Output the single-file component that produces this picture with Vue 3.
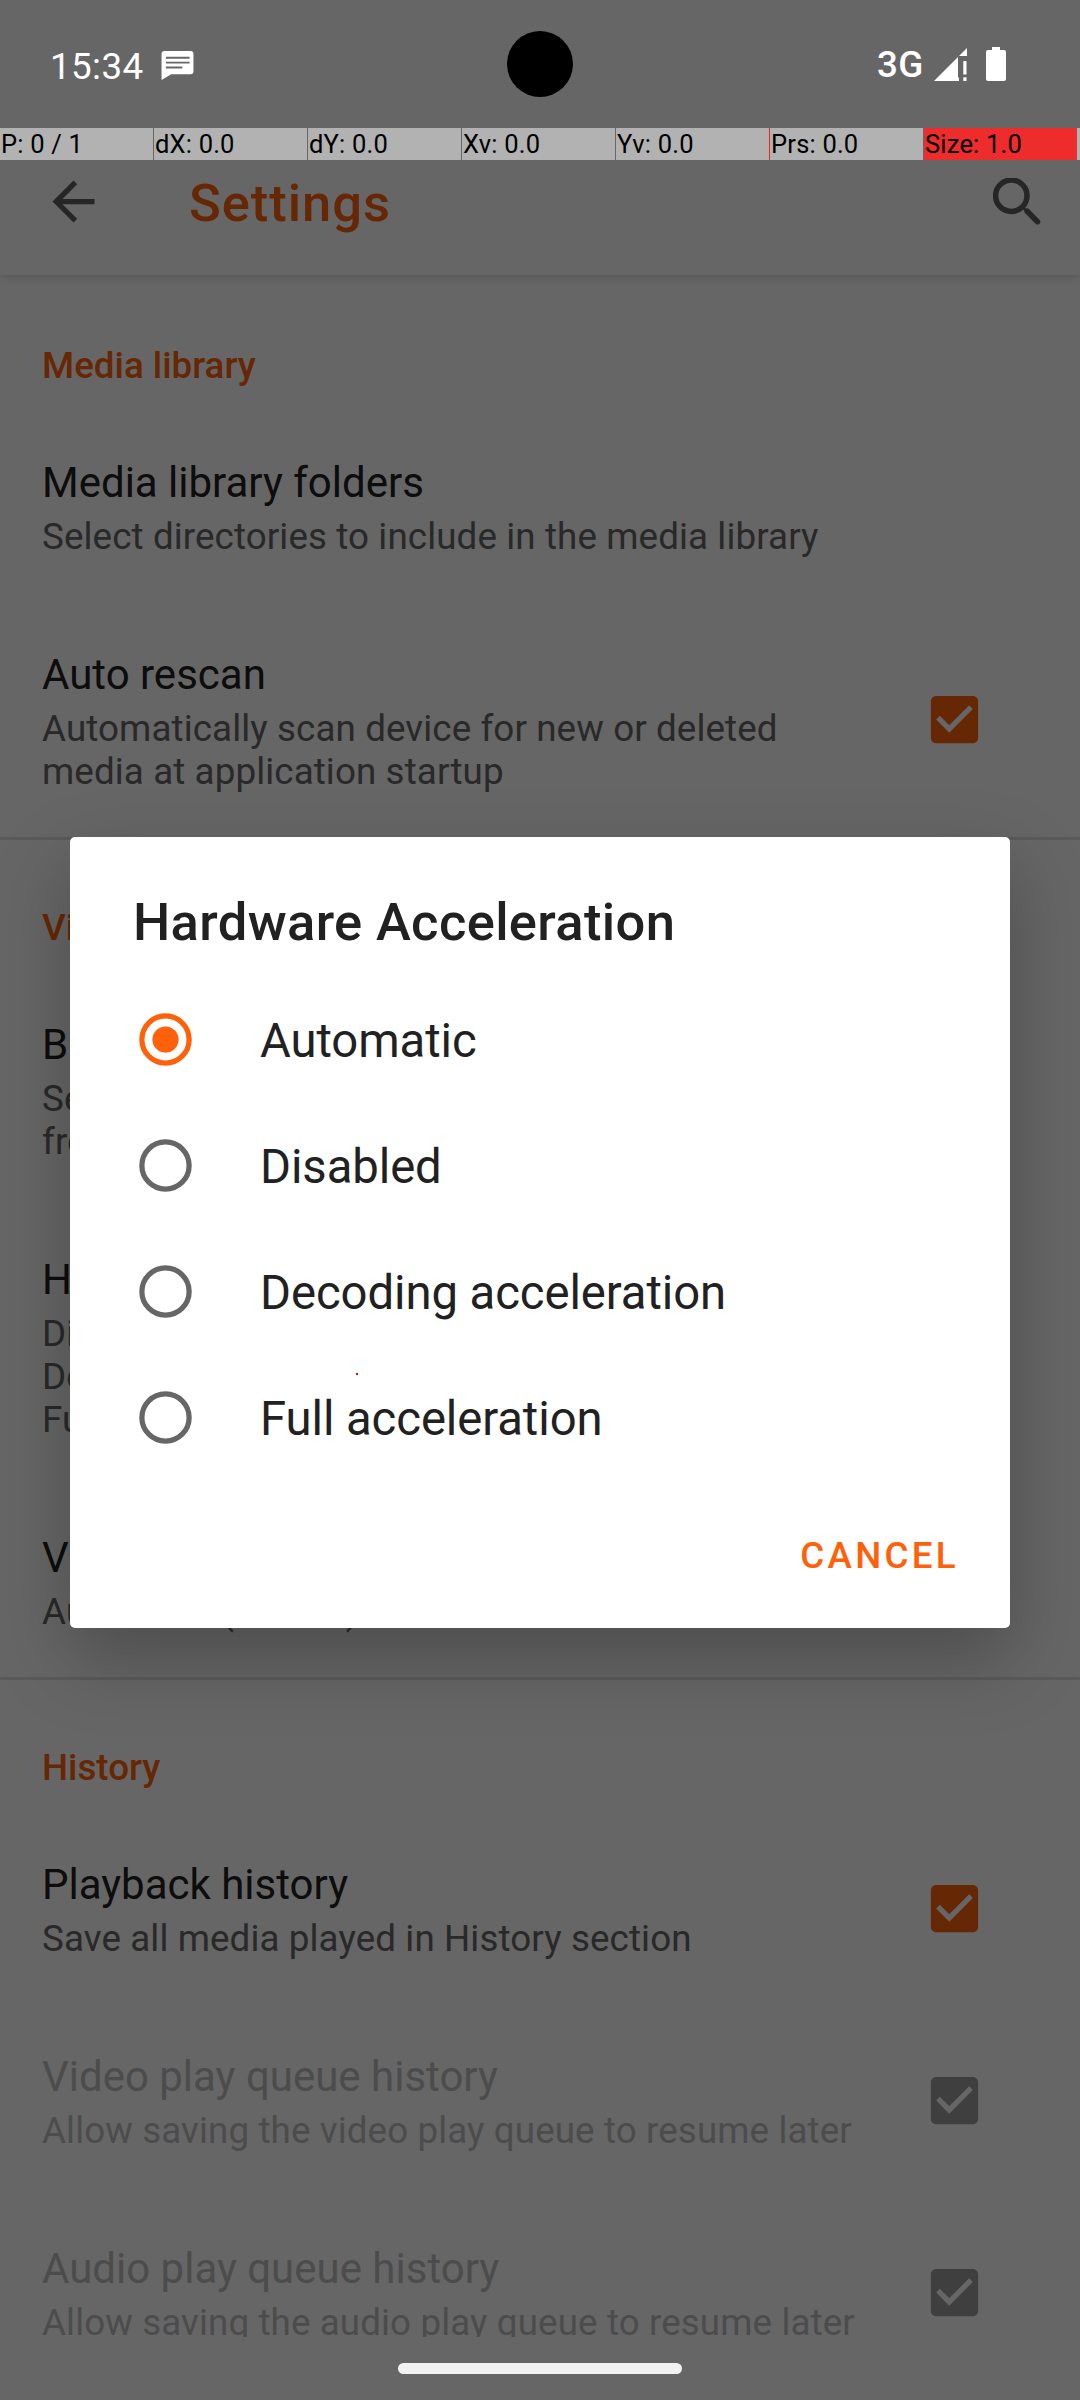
<script setup>
const pointerCells = ['P: 0 / 1', 'dX: 0.0', 'dY: 0.0', 'Xv: 0.0', 'Yv: 0.0', 'Prs: 0.0', 'Size: 1.0']

const sections = [
  {
    title: 'Media library',
    rows: [
      { title: 'Media library folders', lines: ['Select directories to include in the media library'] },
      {
        title: 'Auto rescan',
        lines: ['Automatically scan device for new or deleted', 'media at application startup'],
        check: true,
      },
    ],
  },
  {
    title: 'Video',
    rows: [
      { title: 'Background/PiP mode', lines: ['Select the behavior when switching away', 'from VLC'] },
      {
        title: 'Hardware Acceleration',
        lines: [
          'Disabled: better stability.',
          'Decoding: may improve performance.',
          'Full: may improve performance further.',
        ],
      },
      { title: 'Video screen orientation', lines: ['Automatic (sensor)'] },
    ],
  },
  {
    title: 'History',
    rows: [
      { title: 'Playback history', lines: ['Save all media played in History section'], check: true },
      {
        title: 'Video play queue history',
        lines: ['Allow saving the video play queue to resume later'],
        check: true,
        disabled: true,
      },
      {
        title: 'Audio play queue history',
        lines: ['Allow saving the audio play queue to resume later'],
        check: true,
        disabled: true,
      },
    ],
  },
]

const options = [
  { label: 'Automatic', selected: true },
  { label: 'Disabled' },
  { label: 'Decoding acceleration' },
  { label: 'Full acceleration' },
]
</script>

<template>
  <div class="screen">
    <div class="app">
      <header class="toolbar">
        <svg class="back" viewBox="0 0 24 24"><path d="M20 11H7.83l5.59-5.59L12 4l-8 8 8 8 1.41-1.41L7.83 13H20z" /></svg>
        <h1>Settings</h1>
        <svg class="search" viewBox="0 0 48 48">
          <circle cx="18.300" cy="17.700" r="15.700" />
          <path d="M29 28.500L34 33.500" class="link" />
          <path d="M34.200 33.200L44.500 43.700" />
        </svg>
      </header>
      <main class="list">
        <section v-for="s in sections" :key="s.title">
          <h2>{{ s.title }}</h2>
          <div v-for="r in s.rows" :key="r.title" class="row" :class="{ disabled: r.disabled }">
            <div class="texts">
              <div class="title">{{ r.title }}</div>
              <div v-for="l in r.lines" :key="l" class="summary">{{ l }}</div>
            </div>
            <svg v-if="r.check" class="check" viewBox="0 0 24 24">
              <path d="M19 3H5c-1.11 0-2 .9-2 2v14c0 1.1.89 2 2 2h14c1.11 0 2-.9 2-2V5c0-1.1-.89-2-2-2zm-9 14l-5-5 1.41-1.41L10 14.17l7.59-7.59L19 8l-9 9z" />
            </svg>
          </div>
        </section>
      </main>
    </div>

    <div class="overlay">
      <div class="dialog">
        <h3>Hardware Acceleration</h3>
        <div v-for="o in options" :key="o.label" class="option" :class="{ selected: o.selected }">
          <svg viewBox="0 0 24 24">
            <circle class="ring" cx="12" cy="12" r="9" />
            <circle v-if="o.selected" class="dot" cx="12" cy="12" r="5" />
          </svg>
          <span>{{ o.label }}</span>
        </div>
        <div class="actions"><button>CANCEL</button></div>
      </div>
    </div>

    <div class="system">
      <div class="status">
        <span class="time">15:34</span>
        <svg class="message" viewBox="0 0 33 30">
          <path fill-rule="evenodd" d="M3 0H30a3 3 0 0 1 3 3V21a3 3 0 0 1-3 3H10L0 30V3a3 3 0 0 1 3-3zM4.500 6v2H29V6zM4.500 11v2H29v-2zM4.500 16v2H21.500v-2z" />
        </svg>
        <span class="spacer"></span>
        <span class="net">3G</span>
        <svg class="signal" viewBox="0 0 33 33">
          <path d="M33 0V8H25zM24 9V29.500H25V33H0zM29.300 13H32.500V26.500H29.300zM29.300 29.300H32.500V33H29.300z" />
        </svg>
        <svg class="battery" viewBox="0 0 20 34">
          <path d="M6 0h8v3h4a2 2 0 0 1 2 2V32a2 2 0 0 1-2 2H2a2 2 0 0 1-2-2V5a2 2 0 0 1 2-2h4z" />
        </svg>
      </div>
      <div class="pointer">
        <span v-for="(c, i) in pointerCells" :key="c" :class="{ mark: i === 4, hot: i === 6 }">{{ c }}</span>
        <i></i>
      </div>
    </div>
    <div class="camera"></div>
    <div class="touch"></div>
    <div class="handle"></div>
  </div>
</template>

<style>
body {
  margin: 0;
}
</style>

<style scoped>
.screen {
  position: relative;
  width: 1080px;
  height: 2400px;
  overflow: hidden;
  background: #fff;
  font-family: Roboto, sans-serif;
  color: #212121;
}
h1,
h2,
h3 {
  margin: 0;
  font-weight: 500;
}
.app {
  display: flex;
  flex-direction: column;
  height: 2337px;
  overflow: hidden;
}
.toolbar {
  display: flex;
  align-items: center;
  flex: none;
  box-sizing: border-box;
  height: 275px;
  padding: 128px 39px 0 42px;
  box-shadow: 0 2px 10px rgba(0, 0, 0, 0.15);
}
.back {
  width: 63px;
  height: 63px;
  fill: #606060;
}
h1 {
  flex: 1;
  padding-left: 84px;
  font-size: 52.5px;
  line-height: 62px;
  letter-spacing: 0.95px;
  color: #ff610a;
  transform: translateY(1px);
}
.search {
  width: 48px;
  height: 48px;
  fill: none;
  stroke: #606060;
  stroke-width: 5.5;
  stroke-linecap: round;
}
.search .link {
  stroke-width: 3;
}
.list {
  flex: none;
}
h2 {
  box-sizing: border-box;
  height: 135px;
  padding: 69px 42px 0;
  font-size: 36.75px;
  line-height: 43px;
  color: #ff610a;
}
section + section h2 {
  border-top: 3px solid #e0e0e0;
  padding-top: 66px;
}
.row {
  display: flex;
  align-items: center;
  justify-content: space-between;
  padding: 48px 94.5px 44px 42px;
}
.title {
  margin-bottom: 8px;
  font-size: 42px;
  line-height: 49px;
  white-space: nowrap;
}
.summary {
  font-size: 36.75px;
  line-height: 43px;
  letter-spacing: 0.11px;
  color: #666;
  white-space: nowrap;
}
.check {
  width: 63px;
  height: 63px;
  margin: -14px 0 -10px;
  fill: #ff610a;
}
.disabled .title,
.disabled .summary {
  color: #bebebe;
}
.disabled .check {
  fill: #9e9e9e;
}
.overlay {
  position: absolute;
  inset: 0;
  box-sizing: border-box;
  padding: 837px 70px 0;
  background: rgba(0, 0, 0, 0.6);
}
.dialog {
  box-sizing: border-box;
  height: 791px;
  border-radius: 5px;
  background: #fff;
  box-shadow: 0 30px 76px rgba(0, 0, 0, 0.25);
}
h3 {
  box-sizing: border-box;
  height: 139px;
  padding: 54px 63px 0;
  font-size: 52.5px;
  line-height: 62px;
  letter-spacing: 0.36px;
}
.option {
  display: flex;
  align-items: center;
  height: 126px;
  padding-left: 63.5px;
  font-size: 47.25px;
  letter-spacing: -0.08px;
}
.option svg {
  width: 63px;
  height: 63px;
}
.option span {
  margin-left: 63.5px;
  line-height: 56px;
  transform: translateY(2px);
}
.ring {
  fill: none;
  stroke: #666;
  stroke-width: 2;
}
.selected .ring {
  stroke: #ff610a;
}
.dot {
  fill: #ff610a;
}
.actions {
  display: flex;
  justify-content: flex-end;
  padding: 54px 51px 0 0;
}
button {
  padding: 0;
  border: 0;
  background: none;
  font: 500 36.75px/43px Roboto, sans-serif;
  letter-spacing: 3.28px;
  color: #ff610a;
}
.system {
  position: absolute;
  inset: 0 0 auto;
}
.status {
  display: flex;
  align-items: center;
  box-sizing: border-box;
  height: 128px;
  padding: 0 74px 0 50px;
  font-size: 36.75px;
  color: #fff;
}
.status svg {
  fill: #fff;
}
.time {
  width: 110.5px;
  letter-spacing: 0.4px;
  transform: translateY(2px);
}
.message {
  width: 33px;
  height: 29px;
  margin-top: 3px;
}
.spacer {
  flex: 1;
}
.net {
  margin-right: -1px;
  font-weight: 500;
  letter-spacing: 0.6px;
}
.signal {
  width: 33px;
  height: 33px;
  margin: 0 19px 0 11px;
}
.battery {
  width: 20px;
  height: 34px;
}
.pointer {
  display: flex;
  gap: 1px;
  height: 32px;
  font-size: 25.5px;
  line-height: 33px;
  letter-spacing: 0.2px;
  color: #000;
}
.pointer span {
  box-sizing: border-box;
  width: 153px;
  height: 32px;
  padding-left: 1px;
  background: #b2b2b2;
  white-space: nowrap;
}
.pointer .mark {
  box-shadow: 1px 0 0 #e22;
}
.pointer .hot {
  background: #ee2c2c;
}
.pointer i {
  flex: 1;
  margin-left: -1px;
  background: #b2b2b2;
}
.camera {
  position: absolute;
  left: 507px;
  top: 31px;
  width: 66px;
  height: 66px;
  border-radius: 50%;
  background: #000;
}
.touch {
  position: absolute;
  left: 356px;
  top: 1373px;
  width: 2px;
  height: 2px;
  background: #f00;
}
.handle {
  position: absolute;
  left: 398px;
  top: 2363px;
  width: 284px;
  height: 11px;
  border-radius: 5.5px;
  background: #f2f2f2;
}
</style>
